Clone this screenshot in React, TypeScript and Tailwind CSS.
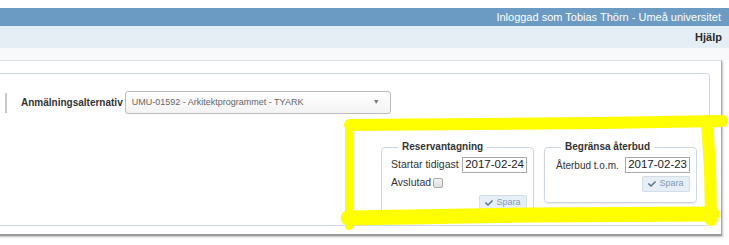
import { FaCheck } from 'react-icons/fa'

const font = { fontFamily: '"Liberation Sans", Arial, sans-serif' }

function SaveButton() {
  return (
    <button className="flex h-[16px] w-[48px] items-center justify-center gap-[3px] rounded-[2px] border border-[#d3dde7] bg-[#e7eef5] text-[9px] text-[#7d9bb8]">
      <FaCheck className="h-[8px] w-[8px] text-[#5a7590]" />
      <span>Spara</span>
    </button>
  )
}

function DateInput({ value }: { value: string }) {
  return (
    <div className="flex h-[16px] items-center border border-[#a9a9a9] bg-white px-[2px] text-[11.5px] leading-none text-[#222]">
      {value}
    </div>
  )
}

function Group({
  title,
  children,
  className,
  legendClass,
}: {
  title: string
  children: React.ReactNode
  className?: string
  legendClass?: string
}) {
  return (
    <fieldset className={`rounded-[4px] border border-[#cdd7e0] shadow-[0_1px_1px_rgba(0,0,0,0.08)] ${className ?? ''}`}>
      <legend className={`px-[4px] text-[10px] font-bold leading-[12px] text-[#333] ${legendClass ?? ''}`}>{title}</legend>
      {children}
    </fieldset>
  )
}

export default function App() {
  return (
    <div className="relative h-[245px] w-[729px] overflow-hidden bg-white" style={font}>
      <div className="pt-[8px]">
        <div className="flex h-[18px] items-center justify-end bg-[#6b9ac2] pr-[8px] text-[11px] text-white">
          Inloggad som Tobias Thörn - Umeå universitet
        </div>
        <div className="flex h-[22px] items-center justify-end bg-[#e5edf5] pr-[7px] text-[11px] font-bold text-[#2a2a2a]">
          Hjälp
        </div>
        <div className="h-[12px] bg-[#f8f9fa]" />
      </div>

      {/* outer container */}
      <div className="-ml-[10px] mr-[7px] h-[176px] border border-[#dde2e7] border-r-[#a8a8a8] border-b-2 border-b-[#9a9a9a] bg-white pr-[11px] pt-[12px] shadow-[1px_1px_2px_rgba(0,0,0,0.25)]">
        {/* inner panel */}
        <div className="h-[153px] rounded-[3px] border border-[#cbdbea] pt-[17px]">
          <div className="flex items-center">
            <div className="ml-[13px] h-[20px] border-l-2 border-[#c8c8c8]" />
            <span className="ml-[14px] text-[10px] font-bold text-[#333]">Anmälningsalternativ</span>
            <div className="ml-[2px] flex h-[23px] w-[266px] items-center justify-between rounded-[3px] border border-[#bcbcbc] bg-gradient-to-b from-white to-[#f3f3f3] pl-[6px] pr-[10px] text-[9px] text-[#666]">
              <span>UMU-01592 - Arkitektprogrammet - TYARK</span>
              <span className="text-[7px] text-[#777]">▼</span>
            </div>
          </div>

          <div className="mt-[27px] flex items-start justify-end gap-[10px] pr-[12px]">
            <Group title="Reservantagning" className="h-[76px] w-[153px] pl-[9px] pr-[6px]" legendClass="ml-[7px]">
              <div className="mt-[4px] flex items-center justify-between text-[10.5px] text-[#333]">
                <span>Startar tidigast</span>
                <DateInput value="2017-02-24" />
              </div>
              <div className="mt-[2px] flex items-center gap-[2px] text-[10.5px] text-[#333]">
                <span>Avslutad</span>
                <span className="h-[10px] w-[10px] rounded-[2px] border border-[#aaa] bg-gradient-to-b from-[#f4f4f4] to-[#ddd]" />
              </div>
              <div className="mt-[4px] flex justify-end">
                <SaveButton />
              </div>
            </Group>
            <Group title="Begränsa återbud" className="h-[62px] w-[153px] pl-[11px] pr-[6px]" legendClass="ml-[5px]">
              <div className="mt-[4px] flex items-center justify-between text-[10px] text-[#333]">
                <span>Återbud t.o.m.</span>
                <DateInput value="2017-02-23" />
              </div>
              <div className="mt-[3px] flex justify-end">
                <SaveButton />
              </div>
            </Group>
          </div>
        </div>
      </div>

      {/* hand-drawn yellow highlight */}
      <svg className="pointer-events-none absolute left-0 top-0" width="729" height="245">
        <g stroke="#ffff00" fill="none" strokeLinecap="round">
          <path d="M350 125 L600 123 L722 121" strokeWidth="12" />
          <path d="M707 121 L710 170 L711 220" strokeWidth="12" />
          <path d="M712 214 L530 215 L348 218" strokeWidth="15" />
          <path d="M349 124 L349 226" strokeWidth="8" />
        </g>
      </svg>
    </div>
  )
}
